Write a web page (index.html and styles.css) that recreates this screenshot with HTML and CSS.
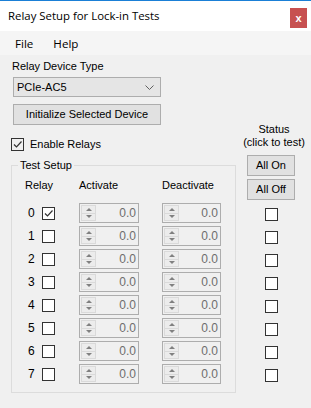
FILE: index.html
```html
<!DOCTYPE html>
<html lang="en">
<head>
    <meta charset="UTF-8">
    <title>Relay Setup for Lock-in Tests</title>
    <link rel="stylesheet" href="styles.css">
</head>
<body>

<div class="window">
    <div class="titlebar">
        <span class="title">Relay Setup for Lock-in Tests</span>
        <span class="close">x</span>
    </div>
    <div class="menubar">
        <span class="menu-item">File</span>
        <span class="menu-item">Help</span>
    </div>

    <div class="content">
        <div class="left-col">
            <div class="label">Relay Device Type</div>
            <div class="combo">
                <span>PCIe-AC5</span>
                <svg class="chevron" width="9" height="5" viewBox="0 0 9 5"><path d="M0.5 0.5 L4.5 4.5 L8.5 0.5" fill="none" stroke="#606060" stroke-width="1"/></svg>
            </div>
            <div class="button wide">Initialize Selected Device</div>

            <div class="check-row">
                <span class="checkbox checked"><svg width="11" height="11" viewBox="0 0 11 11"><path d="M2 5.5 L4.5 8 L9.5 2.5" fill="none" stroke="#333" stroke-width="1.2"/></svg></span>
                <span>Enable Relays</span>
            </div>

            <fieldset class="group">
                <legend>Test Setup</legend>
                <div class="head-row">
                    <span class="h-relay">Relay</span>
                    <span class="h-act">Activate</span>
                    <span>Deactivate</span>
                </div>
                <div id="rows"></div>
            </fieldset>
        </div>

        <div class="right-col">
            <div class="status-text">Status<br>(click to test)</div>
            <div class="button small first">All On</div>
            <div class="button small">All Off</div>
            <div id="status-boxes"></div>
        </div>
    </div>
</div>

<script>
    const spinHtml = `
        <div class="spin">
            <div class="spin-btns">
                <div class="spin-up"><i class="arrow-up"></i></div>
                <div class="spin-down"><i class="arrow-down"></i></div>
            </div>
            <span class="spin-val">0.0</span>
        </div>`;

    const tick = '<svg width="11" height="11" viewBox="0 0 11 11"><path d="M2 5.5 L4.5 8 L9.5 2.5" fill="none" stroke="#333" stroke-width="1.2"/></svg>';

    let rowsHtml = '';
    let boxesHtml = '';
    for (let i = 0; i < 8; i++) {
        rowsHtml += `
            <div class="relay-row">
                <span class="num">${i}</span>
                <span class="checkbox">${i === 0 ? tick : ''}</span>
                ${spinHtml.replace('class="spin"', 'class="spin act"')}
                ${spinHtml}
            </div>`;
        boxesHtml += '<span class="checkbox status-box"></span>';
    }
    document.getElementById('rows').innerHTML = rowsHtml;
    document.getElementById('status-boxes').innerHTML = boxesHtml;
</script>

</body>
</html>
```

FILE: styles.css
```css
* {
    box-sizing: border-box;
}
body {
    margin: 0;
    background-color: #f0f0f0;
    font-family: "Liberation Sans", Arial, sans-serif;
    font-size: 11px;
    line-height: 13px;
    color: #000;
}
.window {
    width: 311px;
    height: 408px;
    overflow: hidden;
}
.titlebar {
    height: 31px;
    background-color: #fff;
    border-top: 1px solid #1a7fd6;
    display: flex;
    align-items: center;
    justify-content: space-between;
    padding: 0 4px 0 8px;
}
.title {
    font-family: "Open Sans", sans-serif;
    font-size: 11.4px;
    margin-top: -1px;
}
.close {
    width: 17px;
    height: 20px;
    background-color: #c75050;
    color: #fff;
    font-weight: bold;
    font-size: 11px;
    display: flex;
    align-items: center;
    justify-content: center;
    margin-top: 4px;
}
.menubar {
    height: 24px;
    background-color: #f5f5f5;
    display: flex;
    align-items: center;
    padding-left: 8px;
}
.menu-item {
    font-family: "Open Sans", sans-serif;
    font-size: 11.6px;
    padding: 0 7px;
    margin-right: 6px;
}
.content {
    display: flex;
    padding: 5px 0 0 11px;
}
.left-col {
    width: 225px;
}
.label {
    padding-left: 1px;
}
.combo {
    width: 148px;
    height: 20px;
    margin: 4px 0 0 2px;
    border: 1px solid #adadad;
    background-color: #e5e5e5;
    display: flex;
    align-items: center;
    justify-content: space-between;
    padding: 0 6px 0 3px;
}
.chevron {
    margin-top: 1px;
}
.button {
    border: 1px solid #adadad;
    background-color: #e1e1e1;
    display: flex;
    align-items: center;
    justify-content: center;
}
.button.wide {
    width: 148px;
    height: 21px;
    margin: 7px 0 0 2px;
}
.check-row {
    display: flex;
    align-items: center;
    margin-top: 13px;
    height: 13px;
}
.check-row .checkbox {
    margin-right: 6px;
}
.checkbox {
    width: 13px;
    height: 13px;
    border: 1px solid #333;
    background-color: #fff;
    display: inline-flex;
    align-items: center;
    justify-content: center;
    flex-shrink: 0;
}
.check-row .checkbox {
    background-color: transparent;
}
.group {
    width: 225px;
    margin: 8px 0 0 0;
    padding: 7px 0 8px 0;
    border: 1px solid #dcdcdc;
}
.group legend {
    margin-left: 6px;
    padding: 0 2px;
    line-height: 13px;
}
.head-row {
    display: flex;
    padding-left: 13px;
}
.h-relay {
    width: 54px;
}
.h-act {
    width: 83px;
}
#rows {
    display: flex;
    flex-direction: column;
    gap: 3px;
    margin-top: 11px;
}
.relay-row {
    display: flex;
    align-items: center;
    height: 20px;
    padding-left: 13px;
}
.num {
    width: 17px;
    padding-left: 3px;
    font-size: 12px;
}
.relay-row .checkbox {
    margin-top: 1px;
}
.spin {
    width: 59px;
    height: 20px;
    margin-left: 23px;
    border: 1px solid #adadad;
    background-color: #f0f0f0;
    display: flex;
    align-items: center;
    justify-content: space-between;
    padding: 0 2px 0 1px;
}
.spin.act {
    width: 60px;
    margin-left: 24px;
}
.spin-btns {
    width: 15px;
    height: 16px;
    display: flex;
    flex-direction: column;
}
.spin-up, .spin-down {
    flex: 1;
    border: 1px solid #dadada;
    background-color: #ececec;
    display: flex;
    align-items: center;
    justify-content: center;
}
.spin-down {
    border-top: none;
}
.arrow-up, .arrow-down {
    width: 0;
    height: 0;
    border-left: 3px solid transparent;
    border-right: 3px solid transparent;
}
.arrow-up {
    border-bottom: 3px solid #808080;
}
.arrow-down {
    border-top: 3px solid #808080;
}
.spin-val {
    color: #6d6d6d;
    font-size: 12px;
}
.right-col {
    width: 62px;
    margin: 63px 0 0 7px;
    display: flex;
    flex-direction: column;
}
.status-text {
    text-align: center;
    line-height: 13px;
}
.button.small {
    width: 48px;
    height: 21px;
    margin: 3px 0 0 4px;
}
.button.small.first {
    margin-top: 6px;
}
#status-boxes {
    display: flex;
    flex-direction: column;
    gap: 10px;
    margin: 8px 0 0 22px;
}
```
